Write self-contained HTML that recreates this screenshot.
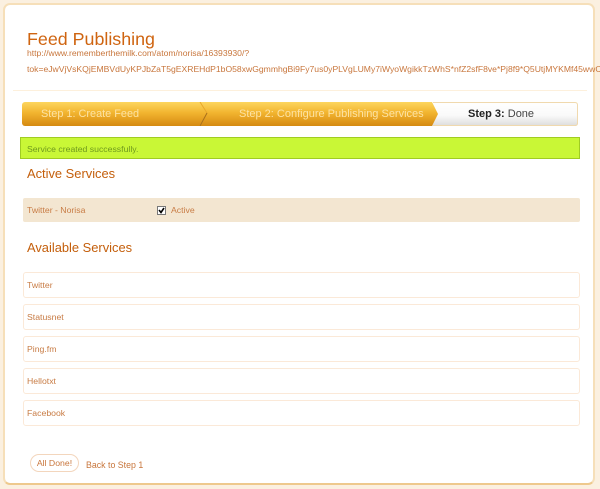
<!DOCTYPE html>
<html>
<head>
<meta charset="utf-8">
<style>
html,body{margin:0;padding:0;background:#fff}
body{position:relative;width:600px;height:489px;overflow:hidden;font-family:"Liberation Sans",sans-serif;color:#c8763c}
.a{position:absolute;white-space:nowrap}
#frame{left:0;top:0;width:600px;height:489px;box-sizing:border-box;background:#fbf0e0}
#panel{left:3px;top:3px;width:592px;height:482px;box-sizing:border-box;background:#fff;border:2px solid #f6dfb9;border-bottom-color:#eec98d;border-radius:7px}
h1,h2{margin:0;font-weight:normal;color:#c45f0c}
.row{left:23px;width:557px;height:26px;box-sizing:border-box;border:1px solid #fbe9d8;border-radius:3px;background:#fff;font-size:8.7px;line-height:24px;padding-left:3px;color:#c87c45}
#bar{left:22px;top:102px;width:556px;height:24px;box-sizing:border-box;border-radius:3px;background:linear-gradient(#fdd65f,#f2b42f 45%,#d58a12);overflow:hidden}
#bar span{position:absolute;top:0;line-height:24px;font-size:11px;color:#fde3a4;white-space:nowrap}
</style>
</head>
<body>
<div class="a" id="frame"></div>
<div class="a" id="panel"></div>

<h1 class="a" style="left:27px;top:28px;font-size:17.85px;line-height:22px;color:#cf6410">Feed Publishing</h1>
<div class="a" style="left:27px;top:47px;font-size:8.6px;line-height:12px;color:#c8763c">http://www.rememberthemilk.com/atom/norisa/16393930/?</div>
<div class="a" style="left:27px;top:63px;width:573px;overflow:hidden;font-size:8.6px;line-height:12px;color:#c8763c">tok=eJwVjVsKQjEMBVdUyKPJbZaT5gEXREHdP1bO58xwGgmmhgBi9Fy7us0yPLVgLUMy7iWyoWgikkTzWhS*nfZ2sfF8ve*Pj8f9*Q5UtjMYKMf45wwCQ</div>
<div class="a" style="left:13px;top:90px;width:574px;height:1px;background:#fdf0dc"></div>

<div class="a" id="bar">
  <span style="left:19px;font-size:10.9px">Step 1: Create Feed</span>
  <span style="left:217px">Step 2: Configure Publishing Services</span>
  <svg style="position:absolute;left:0;top:0" width="556" height="24">
    <defs><linearGradient id="w" x1="0" y1="0" x2="0" y2="1"><stop offset="0" stop-color="#fff"/><stop offset=".55" stop-color="#fafafa"/><stop offset="1" stop-color="#dcdcdc"/></linearGradient></defs>
    <path d="M178 0L185 11L178 24" fill="none" stroke="#e8a72a" stroke-width="1"/>
    <path d="M185 11L178 24" fill="none" stroke="#a8701c" stroke-width="1"/>
    <path d="M410 0L556 0L556 24L410 24L416 12Z" fill="url(#w)"/>
  </svg>
  <span style="left:446px;color:#444"><b style="color:#222">Step 3:</b> Done</span>
</div>
<div class="a" style="left:22px;top:102px;width:556px;height:24px;box-sizing:border-box;border:1px solid #f0d9ae;border-left:0;border-radius:3px;clip-path:inset(0 0 0 411px)"></div>

<div class="a" style="left:20px;top:137px;width:560px;height:22px;box-sizing:border-box;background:#c9f736;border:1px solid #a0cc22;font-size:8.7px;line-height:22px;padding-left:6px;color:#6f9a1e">Service created successfully.</div>

<h2 class="a" style="left:27px;top:166px;font-size:12.9px;line-height:16px">Active Services</h2>

<div class="a" style="left:23px;top:198px;width:557px;height:24px;border-radius:2px;background:#f3e6d1;font-size:8.7px;line-height:24px;color:#c87c45">
  <span class="a" style="left:4px;top:0">Twitter - Norisa</span>
  <svg class="a" style="left:134px;top:8px" width="9" height="9"><rect x=".5" y=".5" width="8" height="8" fill="#fff" stroke="#777"/><path d="M2 4L4 6.5L7 2" fill="none" stroke="#000" stroke-width="1.6"/></svg>
  <span class="a" style="left:148px;top:0">Active</span>
</div>

<h2 class="a" style="left:27px;top:240px;font-size:12.9px;line-height:16px">Available Services</h2>

<div class="a row" style="top:272px">Twitter</div>
<div class="a row" style="top:304px">Statusnet</div>
<div class="a row" style="top:336px">Ping.fm</div>
<div class="a row" style="top:368px">Hellotxt</div>
<div class="a row" style="top:400px">Facebook</div>

<div class="a" style="left:30px;top:454px;width:49px;height:18px;box-sizing:border-box;border:1px solid #f3d6bd;border-radius:9px;background:#fff;font-size:8.7px;line-height:16px;text-align:center;color:#c8763c">All Done!</div>
<div class="a" style="left:86px;top:459px;font-size:8.8px;line-height:12px;color:#c8763c">Back to Step 1</div>
</body>
</html>
